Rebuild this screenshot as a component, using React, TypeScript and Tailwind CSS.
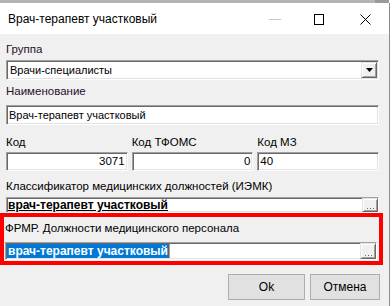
import React from "react";

const sunken =
  "bg-white border border-t-[#a0a0a0] border-l-[#a0a0a0] border-b-white border-r-white shadow-[inset_1px_1px_0_#696969,inset_-1px_-1px_0_#e3e3e3]";
const raised =
  "bg-[#f0f0f0] border border-t-[#e3e3e3] border-l-[#e3e3e3] border-b-[#696969] border-r-[#696969] shadow-[inset_1px_1px_0_#ffffff,inset_-1px_-1px_0_#a0a0a0]";

function DotsButton() {
  return (
    <div className={`${raised} w-[16px] h-full flex items-end justify-center pb-[2px]`}>
      <div className="flex gap-[2px]">
        <span className="w-[1px] h-[1px] bg-[#b06020]" />
        <span className="w-[1px] h-[1px] bg-[#2060b0]" />
        <span className="w-[1px] h-[1px] bg-[#b06020]" />
      </div>
    </div>
  );
}

export default function App() {
  return (
    <div className="w-[392px] h-[306px] overflow-hidden flex flex-col bg-[#f0f0f0] font-['Liberation_Sans',Arial,sans-serif] text-[11.5px] text-black">
      <div className="h-[3px] flex">
        <div className="w-[375px] bg-[#b4b4b4]" />
        <div className="w-[14px] bg-[#9a9a9a]" />
        <div className="flex-1 bg-white" />
      </div>
      <div className="flex-1 flex">
        <div className="w-[389px] flex flex-col">
          {/* title bar */}
          <div className="h-[31px] bg-white flex items-center">
            <div className="pl-[8px] text-[12px] text-black flex-1">Врач-терапевт участковый</div>
            <div className="w-[12px] h-[1px] bg-[#c8c8c8] mr-[33px] mt-[2px]" />
            <div className="w-[10px] h-[11px] border border-black mr-[36px] mt-[1px]" />
            <svg width="11" height="11" viewBox="0 0 11 11" className="mr-[18px] mt-[1px]">
              <path d="M0.5 0.5 L10.5 10.5 M10.5 0.5 L0.5 10.5" stroke="#000" strokeWidth="1" />
            </svg>
          </div>
          {/* body */}
          <div className="flex-1 bg-[#f0f0f0] flex flex-col">
            <div className="pl-[6px] pr-[10px] flex flex-col">
              <div className="h-[16px] mt-[8px] flex items-center text-[#2a0f2a]">Группа</div>
              <div className={`${sunken} mt-[2px] h-[20px] flex items-center`}>
                <div className="flex-1 pl-[3px] text-[11px]">Врачи-специалисты</div>
                <div className={`${raised} w-[16px] h-[16px] mr-px flex items-center justify-center`}>
                  <svg width="7" height="4" viewBox="0 0 7 4">
                    <path d="M0 0 H7 L3.5 4 Z" fill="#000" />
                  </svg>
                </div>
              </div>
              <div className="h-[16px] mt-[4px] flex items-center text-[#2a0f2a]">Наименование</div>
              <div className={`${sunken} mt-[5px] h-[20px] flex items-center pl-[2px] text-[11px]`}>
                Врач-терапевт участковый
              </div>
              <div className="mt-[9px] h-[16px] grid grid-cols-3 gap-[4px]">
                <div className="flex items-center">Код</div>
                <div className="flex items-center">Код ТФОМС</div>
                <div className="flex items-center">Код МЗ</div>
              </div>
              <div className="mt-[2px] h-[19px] grid grid-cols-3 gap-[4px]">
                <div className={`${sunken} flex items-center justify-end pr-[2px]`}>3071</div>
                <div className={`${sunken} flex items-center justify-end pr-[2px]`}>0</div>
                <div className={`${sunken} flex items-center pl-[2px]`}>40</div>
              </div>
              <div className="h-[16px] mt-[8px] flex items-center">Классификатор медицинских должностей (ИЭМК)</div>
              <div className={`${sunken} mt-[2px] h-[16px] flex items-stretch`}>
                <div className="flex-1 pl-[1px] flex items-center font-bold underline text-[12px] leading-none">
                  врач-терапевт участковый
                </div>
                <DotsButton />
              </div>
            </div>
            {/* red highlighted block */}
            <div className="w-[383px] h-[52px] border-[4px] border-[#ff0000] pl-[1px] pr-[2px] flex flex-col">
              <div className="h-[16px] mt-[4px] flex items-center">ФРМР. Должности медицинского персонала</div>
              <div className={`${sunken} mt-[5px] h-[18px] flex items-stretch`}>
                <div className="flex-1 pl-[1px] flex items-center">
                  <span className="bg-[#0078d7] text-white font-bold text-[12px] leading-[14px] px-[1px]">
                    врач-терапевт участковый
                  </span>
                  <span className="w-[1px] h-[14px] bg-[#ff8820]" />
                </div>
                <DotsButton />
              </div>
            </div>
            <div className="mt-[9px] flex justify-end gap-[5px] pr-[9px]">
              <button className="w-[77px] h-[26px] bg-[#e1e1e1] border border-[#adadad] text-[12px] text-black">Ok</button>
              <button className="w-[70px] h-[26px] bg-[#e1e1e1] border border-[#adadad] text-[12px] text-black">Отмена</button>
            </div>
          </div>
        </div>
        <div className="w-[1px] bg-[#8c8c8c]" />
        <div className="flex-1 bg-white" />
      </div>
    </div>
  );
}
